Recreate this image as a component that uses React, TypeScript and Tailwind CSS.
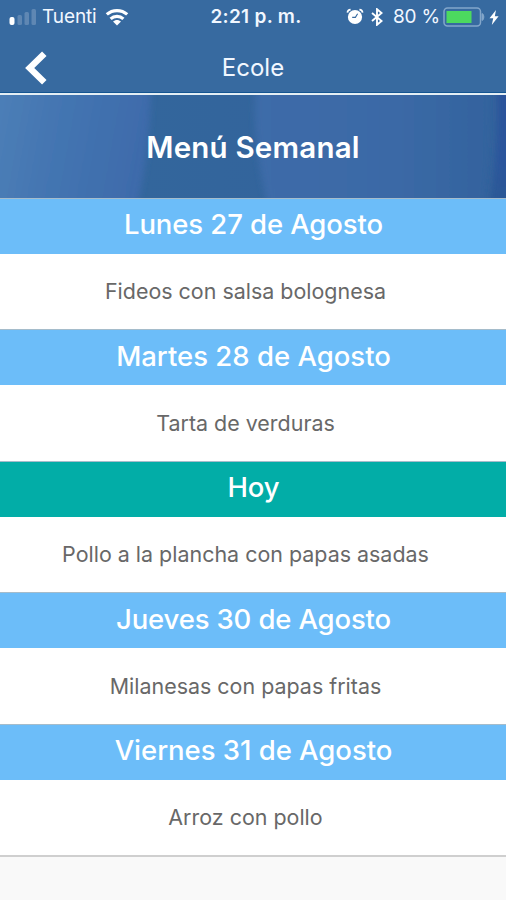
interface Day {
  label: string;
  meal: string;
  today?: boolean;
  tracking: string;
}

const days: Day[] = [
  { label: "Lunes 27 de Agosto", meal: "Fideos con salsa bolognesa", tracking: "tracking-[-0.1px]" },
  { label: "Martes 28 de Agosto", meal: "Tarta de verduras", tracking: "tracking-[0px]" },
  { label: "Hoy", meal: "Pollo a la plancha con papas asadas", today: true, tracking: "tracking-[-0.1px]" },
  { label: "Jueves 30 de Agosto", meal: "Milanesas con papas fritas", tracking: "tracking-[-0.15px]" },
  { label: "Viernes 31 de Agosto", meal: "Arroz con pollo", tracking: "tracking-[-0.03px]" },
];

function SignalIcon() {
  return (
    <svg viewBox="0 0 28 18" className="w-7 h-[18px]" fill="#fff">
      <rect x="0.5" y="9" width="5" height="8" rx="2" />
      <rect x="8.5" y="7" width="4.5" height="10" rx="1.5" opacity="0.2" />
      <rect x="15.5" y="4" width="4.5" height="13" rx="1.5" opacity="0.2" />
      <rect x="22.5" y="1" width="4.5" height="16" rx="1.5" opacity="0.2" />
    </svg>
  );
}

function WifiIcon() {
  return (
    <svg viewBox="0 0 24 18" className="w-6 h-[18px]" fill="none" stroke="#fff" strokeWidth="3.2">
      <path d="M1.8 6.4C7.6 1.3 16.4 1.3 22.2 6.4" />
      <path d="M5.6 10.9C9.2 7.6 14.8 7.6 18.4 10.9" />
      <path d="M12 17.4l-4-3.8c2.3-2.2 5.7-2.2 8 0z" fill="#fff" stroke="none" />
    </svg>
  );
}

function AlarmIcon() {
  return (
    <svg viewBox="0 0 18 18" className="w-[18px] h-[18px]">
      <circle cx="9" cy="9" r="7.1" fill="#fff" />
      <path d="M1.4 4.6C1.6 2.8 2.8 1.7 4.6 1.6M16.6 4.6C16.4 2.8 15.2 1.7 13.4 1.6" stroke="#fff" strokeWidth="1.7" fill="none" />
      <path d="M11.6 5.8L9.4 9.4H6.2" stroke="#376aa0" strokeWidth="1.1" fill="none" />
    </svg>
  );
}

function BluetoothIcon() {
  return (
    <svg viewBox="0 0 12 18" className="w-3 h-[18px]" fill="none" stroke="#fff" strokeWidth="1.9">
      <path d="M1 5l9.6 8L6 16.8V1.2L10.6 5 1 13" />
    </svg>
  );
}

function BatteryIcon() {
  return (
    <svg viewBox="0 0 43 20" className="w-[43px] h-5">
      <rect x="1" y="1" width="36.5" height="18" rx="3.5" fill="none" stroke="#83a6ca" strokeWidth="1.5" />
      <rect x="3.5" y="4" width="25" height="12" fill="#4cd95f" />
      <path d="M39 6.5c2.4 0.7 2.4 6.3 0 7z" fill="#83a6ca" stroke="#83a6ca" />
    </svg>
  );
}

// soft light circles behind the section title
function BannerBackground() {
  return (
    <svg viewBox="0 0 506 103" preserveAspectRatio="none" className="absolute top-0 left-0 w-full h-[103px]">
      <defs>
        <linearGradient id="base" x1="0" x2="1" y1="0" y2="0">
          <stop offset="0.28" stopColor="#33669c" />
          <stop offset="0.9" stopColor="#33629c" />
        </linearGradient>
        <linearGradient id="left" x1="0" x2="1" y1="0" y2="0.15">
          <stop offset="0" stopColor="#5082b9" />
          <stop offset="0.45" stopColor="#4476b2" />
          <stop offset="1" stopColor="#3e6bab" />
        </linearGradient>
        <linearGradient id="right" x1="0" x2="1" y1="0" y2="0">
          <stop offset="0" stopColor="#3d6ca9" />
          <stop offset="0.6" stopColor="#3b69a6" />
          <stop offset="1" stopColor="#33639e" />
        </linearGradient>
        <linearGradient id="edge" x1="0" x2="0" y1="0" y2="1">
          <stop offset="0" stopColor="#2b529a" />
          <stop offset="0.6" stopColor="#2c559c" />
          <stop offset="1" stopColor="#2b5b94" />
        </linearGradient>
        <filter id="soft" x="-20%" y="-20%" width="140%" height="140%">
          <feGaussianBlur stdDeviation="3" />
        </filter>
      </defs>
      <rect width="506" height="103" fill="url(#base)" />
      <path d="M-20 -20H151Q151 60 134 123H-20z" fill="url(#left)" filter="url(#soft)" />
      <path d="M257 -20Q249 40 271 123H483Q493 60 490 -20z" fill="url(#right)" filter="url(#soft)" />
      <path d="M496 -20Q502 40 488 123H530V-20z" fill="url(#edge)" filter="url(#soft)" />
    </svg>
  );
}

function DayRow({ day }: { day: Day }) {
  return (
    <section className="h-[131.5px] flex flex-col border-t border-[#a5bccb]">
      <h2
        className={`h-[55px] shrink-0 flex items-center justify-center pb-[2px] pl-px text-[27.5px] font-medium text-white ${
          day.today ? "bg-[#02ada7]" : "bg-[#6cbdf9]"
        }`}
      >
        <span className={day.tracking}>{day.label}</span>
      </h2>
      <p className="flex-1 flex items-center justify-center pr-[15px] bg-white text-[21.45px] text-[#686868]">
        {day.meal}
      </p>
    </section>
  );
}

export default function App() {
  return (
    <div className="w-[506px] h-[900px] overflow-hidden flex flex-col bg-[#f9f9f9] font-['Inter',sans-serif] whitespace-nowrap">
      <header className="h-[95px] shrink-0 flex flex-col bg-[#376aa0] text-[#f1f7ff]">
        <div className="h-[34px] shrink-0 grid grid-cols-[200px_112px_194px] items-center">
          <div className="flex items-center pl-[9px]">
            <SignalIcon />
            <span className="ml-[5px] w-[63px] text-[19px] tracking-[-0.1px]">Tuenti</span>
            <WifiIcon />
          </div>
          <span className="text-center text-[19px] font-semibold tracking-[0.3px]">2:21 p. m.</span>
          <div className="flex items-center pl-[34px]">
            <AlarmIcon />
            <span className="ml-[7px] flex">
              <BluetoothIcon />
            </span>
            <span className="ml-[10px] w-[50px] text-[19px] tracking-[-0.2px]">80 %</span>
            <BatteryIcon />
            <svg viewBox="0 0 10 15" className="ml-[3px] w-[10px] h-[15px]" fill="#fff">
              <path d="M7 0L0.5 8.2h3.7L2.8 15 9.6 6.3H5.8z" />
            </svg>
          </div>
        </div>
        <div className="h-[59px] shrink-0 grid grid-cols-[100px_1fr_100px] items-center border-b border-[#145591] pt-[9px]">
          <button className="pl-[25px]" aria-label="Volver">
            <svg viewBox="0 0 22 34" className="w-[22px] h-[34px]" fill="none" stroke="#fff" strokeWidth="6.4">
              <path d="M19.3 2.7L4.7 17l14.6 14.3" />
            </svg>
          </button>
          <h1 className="text-center text-[24px]">Ecole</h1>
        </div>
        <div className="flex-1 bg-[#e4eef4]" />
      </header>
      <div className="relative h-[102.5px] shrink-0 flex items-center justify-center pt-[1.5px]">
        <BannerBackground />
        <span className="relative text-[29.5px] font-semibold tracking-[0.2px] text-white">Menú Semanal</span>
      </div>
      <main className="relative h-[659.5px] shrink-0 border-b-2 border-[#cfcfcf]">
        {days.map((day) => (
          <DayRow key={day.label} day={day} />
        ))}
      </main>
    </div>
  );
}
